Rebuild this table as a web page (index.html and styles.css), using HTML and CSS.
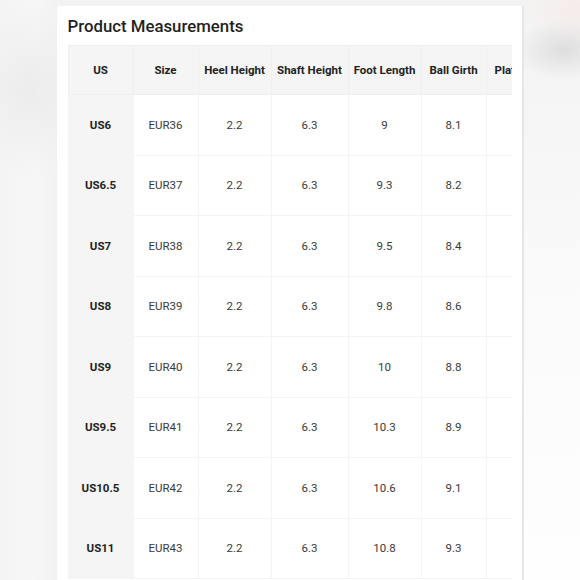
FILE: index.html
```html
<!DOCTYPE html>
<html>
<head>
<meta charset="utf-8">
<link rel="stylesheet" href="styles.css">
</head>
<body>
<div class="page">
  <div class="side side-left"></div>
  <div class="card">
    <h2 class="title">Product Measurements</h2>
    <div class="table-wrap">
      <table class="sizes">
        <colgroup>
          <col class="c-us"><col class="c-size"><col class="c-heel"><col class="c-shaft"><col class="c-foot"><col class="c-ball"><col class="c-plat">
        </colgroup>
        <thead>
          <tr><th>US</th><th>Size</th><th>Heel Height</th><th>Shaft Height</th><th>Foot Length</th><th>Ball Girth</th><th>Platform</th></tr>
        </thead>
        <tbody>
          <tr><th>US6</th><td>EUR36</td><td>2.2</td><td>6.3</td><td>9</td><td>8.1</td><td></td></tr>
          <tr><th>US6.5</th><td>EUR37</td><td>2.2</td><td>6.3</td><td>9.3</td><td>8.2</td><td></td></tr>
          <tr><th>US7</th><td>EUR38</td><td>2.2</td><td>6.3</td><td>9.5</td><td>8.4</td><td></td></tr>
          <tr><th>US8</th><td>EUR39</td><td>2.2</td><td>6.3</td><td>9.8</td><td>8.6</td><td></td></tr>
          <tr><th>US9</th><td>EUR40</td><td>2.2</td><td>6.3</td><td>10</td><td>8.8</td><td></td></tr>
          <tr><th>US9.5</th><td>EUR41</td><td>2.2</td><td>6.3</td><td>10.3</td><td>8.9</td><td></td></tr>
          <tr><th>US10.5</th><td>EUR42</td><td>2.2</td><td>6.3</td><td>10.6</td><td>9.1</td><td></td></tr>
          <tr><th>US11</th><td>EUR43</td><td>2.2</td><td>6.3</td><td>10.8</td><td>9.3</td><td></td></tr>
        </tbody>
      </table>
    </div>
  </div>
  <div class="side side-right"></div>
</div>
</body>
</html>
```
FILE: styles.css
```css
html, body {
  margin: 0;
  padding: 0;
}
body {
  width: 580px;
  height: 580px;
  overflow: hidden;
  background: #f3f3f3;
  font-family: Roboto, "Noto Sans", sans-serif;
}
.page {
  display: flex;
  height: 580px;
}
.side {
  flex: 1;
}
.side-left {
  background:
    radial-gradient(ellipse 60px 90px at 30px 90px, #ececec 0%, rgba(236,236,236,0) 100%),
    linear-gradient(90deg, #f4f4f4 0%, #f7f7f7 60%, #f2f2f2 100%);
}
.side-right {
  background:
    radial-gradient(ellipse 50px 30px at 40px 50px, #dedede 0%, rgba(222,222,222,0) 100%),
    radial-gradient(ellipse 50px 40px at 50px 10px, #f6ecea 0%, rgba(246,236,234,0) 100%),
    linear-gradient(180deg, #f3f3f3 0%, #fafafa 50%, #fefefe 100%);
}
.card {
  flex: none;
  width: 444px;
  margin-top: 6px;
  background: #fff;
  padding: 0 10px 0 11px;
  border-right: 2px solid #e6e6e6;
}
.title {
  margin: 0;
  padding: 9px 0 0 0;
  height: 30px;
  font-size: 16.8px;
  font-weight: 500;
  color: #1f1f1f;
  line-height: 22px;
}
.table-wrap {
  width: 444px;
  overflow: hidden;
}
.sizes {
  border-collapse: collapse;
  table-layout: fixed;
  width: 540px;
  font-size: 11.5px;
  color: #333;
}
.c-us { width: 65px; }
.c-size { width: 65px; }
.c-heel { width: 73px; }
.c-shaft { width: 77px; }
.c-foot { width: 73px; }
.c-ball { width: 65px; }
.c-plat { width: 122px; }
.sizes th, .sizes td {
  border: 1px solid #f4f4f4;
  text-align: center;
  padding: 0 3px;
  white-space: nowrap;
}
.sizes thead th {
  background: #f5f5f5;
  height: 47px;
  padding-bottom: 1px;
  font-weight: 700;
  color: #222;
  border-color: #efefef;
}
.sizes thead th:last-child {
  text-align: left;
  padding-left: 8px;
}
.sizes tbody tr {
  height: 60.5px;
}
.sizes tbody th {
  background: #f5f5f5;
  font-weight: 700;
  color: #1f1f1f;
  border-color: #f5f5f5;
}
.sizes tbody td {
  color: #3a3a3a;
}
```
